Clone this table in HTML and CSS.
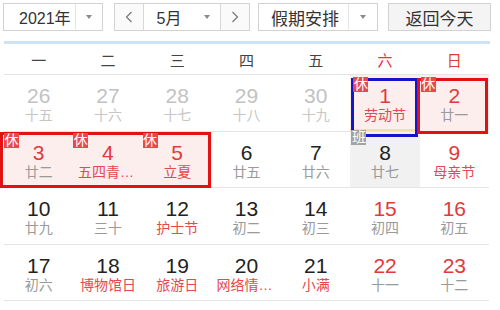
FILE: index.html
```html
<!DOCTYPE html>
<html lang="zh">
<head>
<meta charset="utf-8">
<link rel="stylesheet" href="styles.css">
</head>
<body>
<div class="cal">
  <div class="toolbar">
    <div class="select year"><span class="val">2021年</span><span class="arr"></span></div>
    <div class="month-group">
      <span class="nav"><svg width="8" height="12" viewBox="0 0 8 12"><polyline points="6.5,1 1.5,6 6.5,11" fill="none" stroke="#777" stroke-width="1.2"/></svg></span>
      <span class="val month">5月</span><span class="arr"></span>
      <span class="nav nav-r"><svg width="8" height="12" viewBox="0 0 8 12"><polyline points="1.5,1 6.5,6 1.5,11" fill="none" stroke="#777" stroke-width="1.2"/></svg></span>
    </div>
    <div class="select holiday"><span class="val">假期安排</span><span class="arr"></span></div>
    <div class="today">返回今天</div>
  </div>
  <div class="bar"></div>
  <div class="weekdays">
    <span>一</span><span>二</span><span>三</span><span>四</span><span>五</span><span class="we">六</span><span class="we">日</span>
  </div>
  <div class="grid">
    <div class="cell other"><b>26</b><i>十五</i></div>
    <div class="cell other"><b>27</b><i>十六</i></div>
    <div class="cell other"><b>28</b><i>十七</i></div>
    <div class="cell other"><b>29</b><i>十八</i></div>
    <div class="cell other"><b>30</b><i>十九</i></div>
    <div class="cell rest red fest cur"><span class="badge">休</span><b>1</b><i>劳动节</i></div>
    <div class="cell rest red boxed"><span class="badge">休</span><b>2</b><i>廿一</i></div>

    <div class="cell rest red"><span class="badge">休</span><b>3</b><i>廿二</i></div>
    <div class="cell rest red fest"><span class="badge">休</span><b>4</b><i>五四青年节</i></div>
    <div class="cell rest red fest"><span class="badge">休</span><b>5</b><i>立夏</i></div>
    <div class="cell"><b>6</b><i>廿五</i></div>
    <div class="cell"><b>7</b><i>廿六</i></div>
    <div class="cell work"><span class="badge">班</span><b>8</b><i>廿七</i></div>
    <div class="cell red fest"><b>9</b><i>母亲节</i></div>

    <div class="cell"><b>10</b><i>廿九</i></div>
    <div class="cell"><b>11</b><i>三十</i></div>
    <div class="cell fest"><b>12</b><i>护士节</i></div>
    <div class="cell"><b>13</b><i>初二</i></div>
    <div class="cell"><b>14</b><i>初三</i></div>
    <div class="cell red"><b>15</b><i>初四</i></div>
    <div class="cell red"><b>16</b><i>初五</i></div>

    <div class="cell"><b>17</b><i>初六</i></div>
    <div class="cell fest"><b>18</b><i>博物馆日</i></div>
    <div class="cell fest"><b>19</b><i>旅游日</i></div>
    <div class="cell fest"><b>20</b><i>网络情人节</i></div>
    <div class="cell fest"><b>21</b><i>小满</i></div>
    <div class="cell red"><b>22</b><i>十一</i></div>
    <div class="cell red"><b>23</b><i>十二</i></div>
  </div>
  <div class="mark mark-blue"></div>
  <div class="mark mark-red1"></div>
  <div class="mark mark-red2"></div>
</div>
</body>
</html>
```
FILE: styles.css
```css
html, body {
  margin: 0;
  padding: 0;
  background: #fff;
  overflow: hidden;
}
body {
  font-family: "Liberation Sans", "Noto Sans CJK SC", sans-serif;
  color: #333;
}
.cal {
  position: relative;
  width: 500px;
  height: 310px;
}
.toolbar {
  display: flex;
  align-items: center;
  margin: 3px 0 0 3px;
  height: 28px;
}
.select, .month-group {
  display: flex;
  height: 28px;
  box-sizing: border-box;
  border: 1px solid #d2d2d2;
  background: #fff;
}
.val {
  flex: 1;
  display: flex;
  align-items: center;
  justify-content: center;
  font-size: 16px;
  color: #333;
}
.arr {
  width: 26px;
  border-left: 1px solid #e6e6e6;
  display: flex;
  align-items: center;
  justify-content: center;
}
.arr::after {
  content: "";
  border-left: 3.5px solid transparent;
  border-right: 3.5px solid transparent;
  border-top: 4px solid #8a8a8a;
}
.year { width: 100px; }
.year .val {
  justify-content: flex-start;
  padding-left: 15px;
}
.month-group {
  width: 136px;
  margin-left: 11px;
}
.month-group .arr { border-left: none; }
.nav {
  width: 28px;
  display: flex;
  align-items: center;
  justify-content: center;
  background: #fafafa;
  border-right: 1px solid #d8d8d8;
}
.nav-r {
  border-right: none;
  border-left: 1px solid #d8d8d8;
}
.holiday {
  width: 120px;
  margin-left: 8px;
}
.holiday .val {
  font-size: 17px;
  justify-content: flex-start;
  padding-left: 12px;
}
.holiday .arr { width: 28px; }
.today {
  width: 103px;
  height: 28px;
  margin-left: 10px;
  box-sizing: border-box;
  border: 1px solid #d2d2d2;
  background: #f4f4f4;
  display: flex;
  align-items: center;
  justify-content: center;
  font-size: 17px;
  color: #333;
}
.bar {
  margin: 10px 0 0 4px;
  width: 486px;
  height: 3px;
  background: #cde4f6;
}
.weekdays {
  display: grid;
  grid-template-columns: repeat(7, 1fr);
  width: 485px;
  margin-left: 4px;
  height: 31px;
  box-sizing: border-box;
  border-bottom: 1px solid #e4e4e4;
  align-items: center;
  text-align: center;
  font-size: 15px;
  color: #444;
}
.weekdays .we { color: #e03a3a; }
.grid {
  display: grid;
  grid-template-columns: repeat(7, 1fr);
  grid-auto-rows: 56.5px;
  width: 485px;
  margin-left: 4px;
}
.cell {
  position: relative;
  box-sizing: border-box;
  border-bottom: 1px solid #e4e4e4;
  display: flex;
  flex-direction: column;
  align-items: center;
  padding-top: 9px;
}
.cell b {
  font-weight: normal;
  font-size: 21px;
  line-height: 23px;
  color: #222;
}
.cell i {
  font-style: normal;
  font-size: 14px;
  line-height: 17px;
  color: #9a9a9a;
  max-width: 60px;
  white-space: nowrap;
  overflow: hidden;
  text-overflow: ellipsis;
}
.cell.other b { color: #c2c2c2; }
.cell.other i { color: #c6c6c6; }
.cell.red b { color: #e03a3a; }
.cell.fest i { color: #e5484d; }
.cell.rest { background: #fdeeee; }
.cell.work { background: #f1f1f1; }
.cell.cur::after {
  content: "";
  position: absolute;
  left: 0;
  right: 0;
  bottom: 0;
  height: 2px;
  background: #f7dcaa;
}
.badge {
  position: absolute;
  top: 1px;
  left: 0;
  width: 15px;
  height: 15px;
  font-size: 14px;
  line-height: 15px;
  text-align: center;
  color: #fff;
  background: #e8484a;
  z-index: 2;
}
.cur .badge { left: 3px; top: 2px; }
.boxed .badge { left: 1px; top: 2px; }
.work .badge {
  background: #a3a3a3;
  top: -2px;
  left: 1px;
}
.mark {
  position: absolute;
  box-sizing: border-box;
  border: 3px solid #e01212;
  pointer-events: none;
  z-index: 1;
}
.mark-blue {
  left: 351px;
  top: 75px;
  width: 67px;
  height: 59px;
  border-color: #1414cc;
}
.mark-red1 {
  left: 417px;
  top: 75px;
  width: 71px;
  height: 56px;
}
.mark-red2 {
  left: 0;
  top: 129px;
  width: 211px;
  height: 56px;
}
```
